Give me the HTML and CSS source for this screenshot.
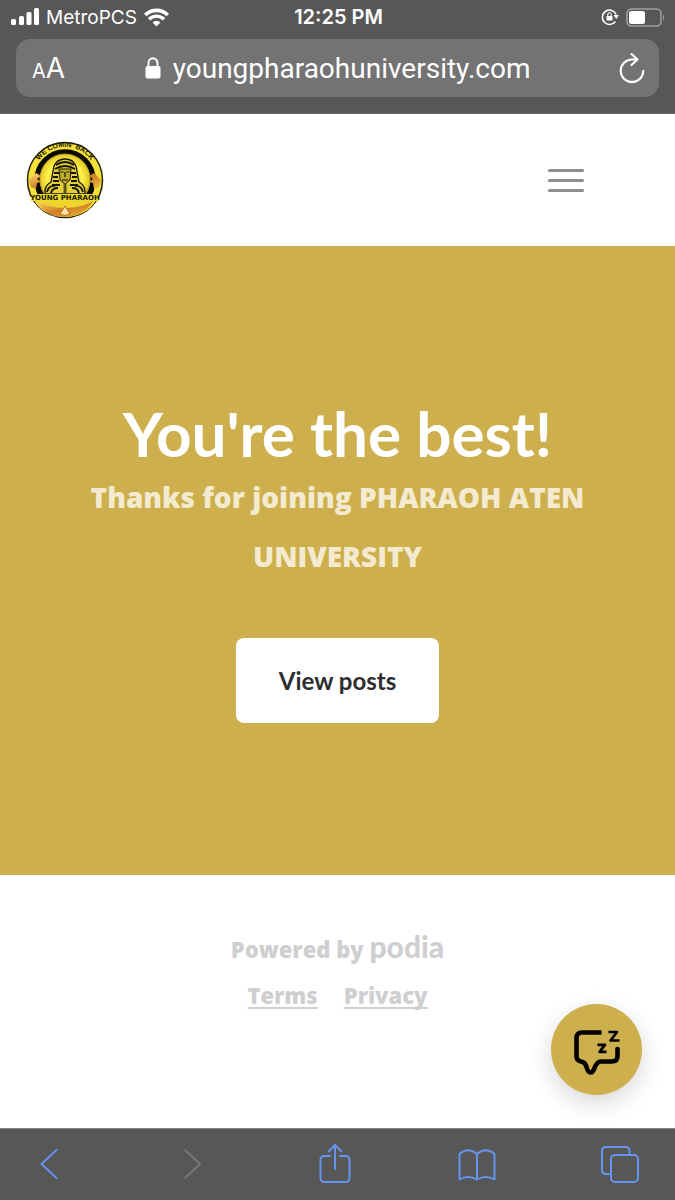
FILE: index.html
```html
<!DOCTYPE html>
<html lang="en">
<head>
<meta charset="utf-8">
<meta name="viewport" content="width=device-width, initial-scale=1">
<title>Young Pharaoh University</title>
<link rel="stylesheet" href="styles.css">
</head>
<body>
<div class="browser-top">
  <div class="status">
    <div class="status-left">
      <svg width="28" height="18" viewBox="0 0 28 18" fill="#fff" aria-hidden="true"><rect x="0" y="11" width="5" height="6" rx="1.5"/><rect x="8" y="8" width="5" height="9" rx="1.5"/><rect x="15.500" y="4" width="5" height="13" rx="1.500"/><rect x="23" y="0" width="5" height="17" rx="1.500"/></svg>
      <span class="carrier">MetroPCS</span>
      <svg width="25" height="19" viewBox="0 0 25 19" aria-hidden="true"><path d="M1.200 7A16 16 0 0 1 23.800 7" fill="none" stroke="#fff" stroke-width="3.600"/><path d="M5 11.200A10.600 10.600 0 0 1 20 11.200" fill="none" stroke="#fff" stroke-width="3.400"/><path d="M8.600 14.400A5.600 5.600 0 0 1 16.400 14.400L12.500 18.400Z" fill="#fff"/></svg>
    </div>
    <span class="time">12:25 PM</span>
    <div class="status-right">
      <svg width="18" height="18" viewBox="0 0 18 18" aria-hidden="true"><path d="M15.200 6.500A7.200 7.200 0 1 0 14.400 13.500" fill="none" stroke="#fff" stroke-width="1.600"/><path d="M12.600 7h5.400L15.300 11Z" fill="#fff"/><rect x="5.500" y="8" width="6" height="4.600" rx=".6" fill="#fff"/><path d="M6.800 8V6.400a1.700 1.700 0 0 1 3.400 0V8" fill="none" stroke="#fff" stroke-width="1.100"/></svg>
      <svg width="40" height="19" viewBox="0 0 40 19" aria-hidden="true"><rect x="1" y="1" width="34" height="17" rx="4.500" fill="none" stroke="#a0a0a0" stroke-width="1.500"/><rect x="3" y="3" width="16" height="13" rx="2.500" fill="#fff"/><path d="M37 6.500q2.500 3 0 6z" fill="#a0a0a0"/></svg>
    </div>
  </div>
  <div class="address">
    <button class="text-size" type="button" aria-label="Text size"><span class="small-a">A</span>A</button>
    <div class="url">
      <svg width="16" height="22" viewBox="0 0 16 22" aria-hidden="true"><rect x="0.500" y="9" width="15" height="12.500" rx="2" fill="#fff"/><path d="M3.500 10V6a4.500 4.700 0 0 1 9 0v4" fill="none" stroke="#fff" stroke-width="1.900"/></svg>
      <span>youngpharaohuniversity.com</span>
    </div>
    <button class="reload" type="button" aria-label="Reload"><svg width="28" height="32" viewBox="0 0 28 32" fill="none" stroke="#fff" stroke-width="2.100" stroke-linecap="round" stroke-linejoin="round"><path d="M19.500 7.500H14A11.300 11.300 0 1 0 25.300 18.800M13.500 2L19.500 7.500L13.500 13"/></svg></button>
  </div>
</div>

<header class="site-header">
  <a class="logo" href="#" aria-label="Young Pharaoh home">
    <svg width="78" height="78" viewBox="0 0 78 78">
      <defs>
        <radialGradient id="gold"><stop offset="0" stop-color="#d8c838"/><stop offset=".7" stop-color="#fff04a"/><stop offset="1" stop-color="#e3c722"/></radialGradient>
        <linearGradient id="bronze" x1="0" x2="1" y1="0" y2="1"><stop offset="0" stop-color="#ffd56d"/><stop offset=".5" stop-color="#cf7e23"/><stop offset="1" stop-color="#f1bf40"/></linearGradient>
        <path id="arc" d="M9 29A31 31 0 0 1 69 29"/>
      </defs>
      <circle cx="39" cy="39" r="37.500" fill="#f4e23a" stroke="#242208" stroke-width="1.500"/>
      <circle cx="39" cy="39" r="28" fill="none" stroke="#090900" stroke-width="5.500"/>
      <circle cx="39" cy="38" r="25" fill="url(#gold)" stroke="#b29827"/>
      <text class="logo-arc"><textPath href="#arc" startOffset="50%" text-anchor="middle">WE COMIN' BACK</textPath></text>
      <path d="M5 53h68Q65 75 39 76Q13 75 5 53Z" fill="#f0d42e"/>
      <path d="M11 60Q22 67 39 67T67 60Q58 75 39 76T11 60Z" fill="url(#bronze)"/>
      <path d="M3 39l7-7 5 3-4 3 4 3-4 1-1 6-5-2zM75 39l-7-7-5 3 4 3-4 3 4 1 1 6 5-2z" fill="url(#bronze)"/>
      <path d="M19 53Q18 45 25 41L28 25Q31 18 39 18T50 25L53 41Q60 45 59 53Z" fill="#e2d036" stroke="#171500" stroke-width="1.300"/>
      <path d="M30 24Q39 18 48 24M29 28Q39 22 49 28M28 32h5M27 36h5M27 40h6M26 44h8M45 32h5M46 36h5M45 40h6M44 44h8M21 51q2-7 8-6M25 52q1-5 7-5M57 51q-2-7-8-6M53 52q-1-5-7-5" fill="none" stroke="#171500" stroke-width="1.900"/>
      <path d="M33 28h12l-1 11-5 4-5-4Z" fill="#bdae2f" stroke="#171500"/>
      <path d="M34.500 31h3M40.500 31h3M39 31v5M36 39h6" stroke="#171500" stroke-width="1.200"/>
      <path d="M37.500 42h3v10h-3z" fill="#5b521a"/>
      <path d="M5 53h68v7H5z" fill="#eed92f"/>
      <text class="logo-name" x="39" y="59" text-anchor="middle">YOUNG PHARAOH</text>
      <path d="M34 73l5-8 5 8q-5 3-10 0z" fill="#ffe1a8" stroke="#b46e22"/>
    </svg>
  </a>
  <button class="menu" type="button" aria-label="Menu"><span></span><span></span><span></span></button>
</header>

<main class="hero">
  <h1>You're the best!</h1>
  <p>Thanks for joining PHARAOH ATEN UNIVERSITY</p>
  <a class="view-posts" href="#">View posts</a>
</main>

<footer class="site-footer">
  <div class="powered">Powered by <a class="podia" href="#">podia</a></div>
  <nav class="legal"><a href="#">Terms</a><a href="#">Privacy</a></nav>
  <button class="chat" type="button" aria-label="Open chat">
    <svg width="50" height="50" viewBox="0 0 50 50" fill="none" stroke="#000" stroke-linejoin="round"><path d="M29.500 7.500H10Q4.500 7.500 4.500 13V31.500Q4.500 35.500 9 36.500Q13 37 14.500 42Q16 47.500 18.500 47.500Q21 47.500 22.500 43Q25 36.500 29 36.500H40Q45.500 36.500 45.500 31V24" stroke-width="4.600"/><circle cx="45.500" cy="24" r="2.300" fill="#000" stroke="none"/><path d="M36.500 7H45L38.500 15.500H47.500M25.500 19.800H33L27.500 26.800H34.500" stroke-width="2.700"/></svg>
  </button>
</footer>

<nav class="toolbar" aria-label="Browser">
  <button type="button" aria-label="Back"><svg width="40" height="42" viewBox="0 0 40 42"><path d="M27.500 7L12.500 21L27.500 35"/></svg></button>
  <button class="disabled" type="button" aria-label="Forward" disabled><svg width="40" height="42" viewBox="0 0 40 42"><path d="M13 7L28 21L13 35"/></svg></button>
  <button type="button" aria-label="Share"><svg width="40" height="42" viewBox="0 0 40 42"><path d="M15 13H9.500Q5.500 13 5.500 17V35Q5.500 39 9.500 39H30.500Q34.500 39 34.500 35V17Q34.500 13 30.500 13H25M20 26V2M13.500 8.500L20 2L26.500 8.500"/></svg></button>
  <button type="button" aria-label="Bookmarks"><svg width="40" height="42" viewBox="0 0 40 42"><path d="M20 11Q11 3.500 2.500 11V36.500Q11 31.500 20 36.500Q29 31.500 37.500 36.500V11Q29 3.500 20 11V36.500"/></svg></button>
  <button type="button" aria-label="Tabs"><svg width="40" height="42" viewBox="0 0 40 42"><rect x="11" y="12" width="27" height="27" rx="4"/><path d="M11 31H6Q2 31 2 27V8Q2 4 6 4H25.500Q29.500 4 29.500 8V12"/></svg></button>
</nav>
</body>
</html>
```

FILE: styles.css
```css
* { box-sizing: border-box; }

body {
  margin: 0;
  min-height: 100vh;
  display: flex;
  flex-direction: column;
  background: #fff;
  font-family: Lato, "Open Sans", sans-serif;
}

button {
  border: 0;
  padding: 0;
  background: none;
  font: inherit;
  color: inherit;
}

svg { display: block; }

.browser-top {
  padding: 0 16px 16px;
  background: #575757;
  border-bottom: 1px solid #6a6a6a;
  color: #fff;
  font-family: Inter, sans-serif;
}

.status {
  display: grid;
  grid-template-columns: 1fr auto 1fr;
  align-items: center;
  height: 34px;
  margin: 0 -7px 5px -5px;
}

.status-left,
.status-right {
  display: flex;
  align-items: center;
  gap: 7px;
}

.status-right { justify-content: flex-end; }
.carrier { font-size: 19px; }
.time { font-size: 20px; font-weight: 600; }

.address {
  display: flex;
  align-items: center;
  justify-content: space-between;
  height: 58px;
  padding: 0 13px 0 16px;
  border-radius: 14px;
  background: #737373;
}

.text-size { font-size: 28px; }
.small-a { font-size: 20px; }
.reload { padding-left: 8px; }

.url {
  display: flex;
  align-items: center;
  gap: 12px;
  font-family: Roboto, sans-serif;
  font-size: 28px;
}

.site-header {
  display: flex;
  align-items: center;
  justify-content: space-between;
  height: 132px;
  padding: 0 91px 0 26px;
}

.logo-arc {
  font: 700 7px "Liberation Sans", sans-serif;
  fill: #171500;
}

.logo-name {
  font: 700 7px "DejaVu Sans", sans-serif;
  fill: #171500;
}

.menu {
  display: flex;
  flex-direction: column;
  gap: 7px;
  width: 36px;
}

.menu span {
  height: 3px;
  border-radius: 2px;
  background: #8e8e90;
}

.hero {
  display: flex;
  flex-direction: column;
  align-items: center;
  padding: 152px 64px;
  background: #cdb04d;
  text-align: center;
}

h1 {
  margin: 0;
  color: #fff;
  font-size: 62px;
  font-weight: 700;
  line-height: 70px;
}

.hero p {
  margin: 0 0 52px;
  max-width: 540px;
  color: #f3ead0;
  font-family: "Open Sans", sans-serif;
  font-size: 28px;
  font-weight: 800;
  line-height: 59px;
}

.view-posts {
  padding: 25px 43px;
  border-radius: 8px;
  background: #fff;
  color: #2e2e30;
  font-size: 24px;
  font-weight: 700;
  line-height: 35px;
  text-decoration: none;
}

.site-footer {
  position: relative;
  flex: 1;
  padding-top: 51px;
  color: #cfcfd2;
  font-family: "Open Sans", sans-serif;
  font-size: 22px;
  font-weight: 800;
  line-height: 46px;
  text-align: center;
}

.site-footer a { color: inherit; }

.site-footer .podia {
  font-family: Lato, sans-serif;
  font-size: 30px;
  font-weight: 900;
  line-height: 30px;
  text-decoration: none;
}

.legal {
  display: flex;
  justify-content: center;
  gap: 26px;
}

.legal a {
  text-decoration-thickness: 2px;
  text-underline-offset: 3px;
  text-decoration-skip-ink: none;
}

.chat {
  position: absolute;
  right: 33px;
  bottom: 33px;
  display: grid;
  place-items: center;
  width: 91px;
  height: 91px;
  border-radius: 50%;
  background: #cdb04d;
  box-shadow: 0 8px 24px rgba(0, 0, 0, 0.16);
}

.toolbar {
  display: flex;
  justify-content: space-between;
  padding: 14px 35px 15px 29px;
  border-top: 1px solid #858585;
  background: #575757;
}

.toolbar svg {
  fill: none;
  stroke: #6594ee;
  stroke-width: 2;
  stroke-linecap: round;
  stroke-linejoin: round;
}

.toolbar .disabled svg { stroke: #777; }
```
